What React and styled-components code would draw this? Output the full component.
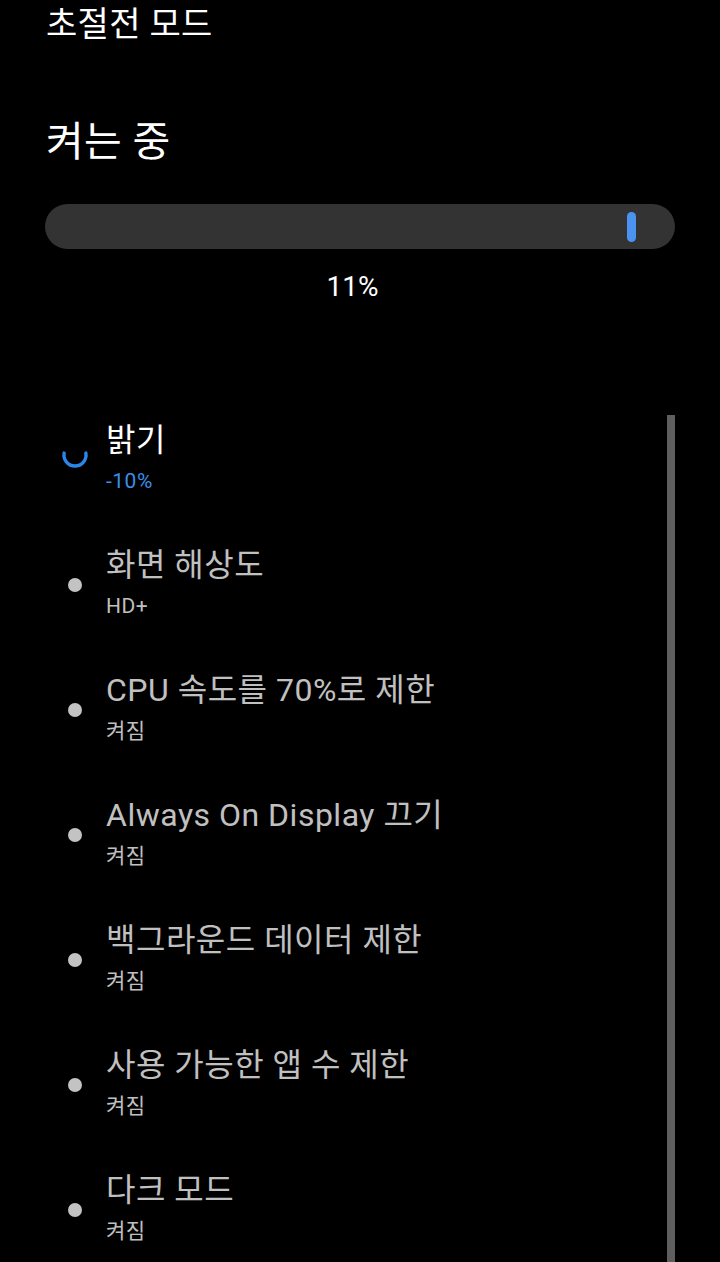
import React from "react";
import styled, { createGlobalStyle } from "styled-components";

const GlobalStyle = createGlobalStyle`
  html, body {
    margin: 0;
    padding: 0;
    background: #000;
  }
  body {
    font-family: "Roboto", "Noto Sans CJK KR", sans-serif;
    color: #fff;
  }
`;

const Page = styled.div`
  background: #000;
  min-height: 1262px;
  display: flex;
  flex-direction: column;
  overflow: hidden;
`;

const ScreenTitle = styled.h1`
  margin: 0;
  padding: 5px 0 0 46px;
  font-size: 34px;
  line-height: 38px;
  font-weight: 400;
  letter-spacing: 0.3px;
  color: #fff;
`;

const Status = styled.h2`
  margin: 76px 0 0 46px;
  font-size: 41px;
  line-height: 46px;
  font-weight: 400;
  letter-spacing: 0.3px;
  color: #fff;
`;

const Track = styled.div`
  margin: 39px 45px 0 45px;
  height: 45px;
  border-radius: 23px;
  background: #333333;
  display: flex;
  align-items: center;
  justify-content: flex-end;
  padding-right: 39px;
`;

const Thumb = styled.span`
  width: 9px;
  height: 30px;
  border-radius: 5px;
  background: #4b93f1;
`;

const Percent = styled.div`
  margin-top: 21px;
  padding-right: 15px;
  text-align: center;
  font-size: 28px;
  line-height: 34px;
  color: #fff;
`;

const ListArea = styled.div`
  margin-top: 111px;
  flex: 1;
  display: flex;
`;

const List = styled.ul`
  flex: 1;
  list-style: none;
  margin: 0;
  padding: 7px 0 0 0;
  display: flex;
  flex-direction: column;
  gap: 53px;
`;

const Scrollbar = styled.div`
  width: 8px;
  margin-right: 45px;
  background: #5e5e5e;
`;

const Item = styled.li`
  display: grid;
  grid-template-columns: 106px 1fr;
  align-items: center;
`;

const Marker = styled.div`
  display: flex;
  justify-content: center;
  padding-left: 44px;
  width: 62px;
  padding-top: ${(p) => (p.$active ? "0" : "4px")};
  padding-bottom: ${(p) => (p.$active ? "6px" : "0")};
`;

const Dot = styled.span`
  width: 14px;
  height: 14px;
  border-radius: 50%;
  background: #c3c3c3;
`;

const Texts = styled.div`
  display: flex;
  flex-direction: column;
`;

const ItemTitle = styled.div`
  font-size: 32px;
  line-height: 36px;
  letter-spacing: 0.5px;
  color: ${(p) => (p.$active ? "#ffffff" : "#c0c0c0")};
`;

const ItemSub = styled.div`
  margin-top: 10px;
  font-size: 21px;
  line-height: 26px;
  letter-spacing: 0.5px;
  color: ${(p) => (p.$active ? "#3b8ee9" : "#c0c0c0")};
`;

function Spinner() {
  return (
    <svg width="28" height="28" viewBox="0 0 28 28">
      <path
        d="M3.17 12.09 A11 11 0 1 0 24.83 12.09"
        fill="none"
        stroke="#2b86ea"
        strokeWidth="3.4"
        strokeLinecap="round"
      />
    </svg>
  );
}

const items = [
  { title: "밝기", sub: "-10%", active: true },
  { title: "화면 해상도", sub: "HD+" },
  { title: "CPU 속도를 70%로 제한", sub: "켜짐" },
  { title: "Always On Display 끄기", sub: "켜짐" },
  { title: "백그라운드 데이터 제한", sub: "켜짐" },
  { title: "사용 가능한 앱 수 제한", sub: "켜짐" },
  { title: "다크 모드", sub: "켜짐" },
];

export default function App() {
  return (
    <Page>
      <GlobalStyle />
      <ScreenTitle>초절전 모드</ScreenTitle>
      <Status>켜는 중</Status>
      <Track>
        <Thumb />
      </Track>
      <Percent>11%</Percent>
      <ListArea>
        <List>
          {items.map((it) => (
            <Item key={it.title}>
              <Marker $active={it.active}>
                {it.active ? <Spinner /> : <Dot />}
              </Marker>
              <Texts>
                <ItemTitle $active={it.active}>{it.title}</ItemTitle>
                <ItemSub $active={it.active}>{it.sub}</ItemSub>
              </Texts>
            </Item>
          ))}
        </List>
        <Scrollbar />
      </ListArea>
    </Page>
  );
}
